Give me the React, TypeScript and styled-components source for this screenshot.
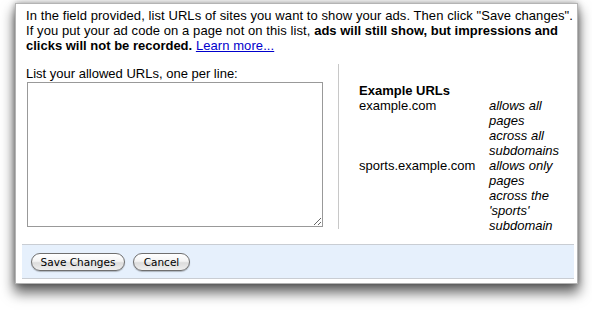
import styled, { createGlobalStyle } from "styled-components";

const Global = createGlobalStyle`
  html, body {
    margin: 0;
    min-height: 310px;
    background: #fff;
    font-family: "Liberation Sans", Arial, sans-serif;
  }
`;

const Stage = styled.div`
  padding: 3px 14px 27px 15px;
`;

const Panel = styled.div`
  width: 561px;
  border: 1px solid #b4b4b4;
  background: #fff;
  box-shadow: 0 8px 12px 1px rgba(0, 0, 0, 0.6), 0 0 6px rgba(0, 0, 0, 0.35);
  font-size: 13px;
  line-height: 15px;
  color: #000;
`;

const Intro = styled.p`
  margin: 0;
  padding: 4px 3px 0 10px;
  letter-spacing: 0.08px;

  b {
    letter-spacing: 0;
  }
`;

const Link = styled.a`
  color: #0000cc;
  text-decoration: underline;
`;

const Columns = styled.div`
  display: flex;
  margin: 11px 0 0 10px;
`;

const LeftCol = styled.div`
  width: 296px;
  padding: 2px 16px 0 0;
`;

const UrlBox = styled.textarea`
  display: block;
  box-sizing: border-box;
  width: 296px;
  height: 145px;
  margin: 1px 0 0 1px;
  border: 1px solid #999;
  resize: both;
  font: inherit;
`;

const RightCol = styled.div`
  border-left: 1px solid #c8c8c8;
  padding: 19px 0 0 20px;
  height: 146px;
`;

const Heading = styled.div`
  font-weight: bold;
`;

const ExampleTable = styled.table`
  border-collapse: collapse;
  td {
    padding: 0;
    vertical-align: top;
  }
`;

const UrlCell = styled.td`
  width: 130px;
`;

const NoteCell = styled.td`
  width: 73px;
  font-style: italic;
`;

const Footer = styled.div`
  display: flex;
  gap: 8px;
  align-items: center;
  height: 33px;
  margin: 15px 3px 4px 6px;
  padding-left: 9px;
  background: #e6f0fc;
  border-top: 1px solid #c9cdd3;
  border-bottom: 1px solid #c9cdd3;
`;

const AquaButton = styled.button<{ $w: number }>`
  box-sizing: border-box;
  width: ${(p) => p.$w}px;
  height: 18px;
  padding: 0;
  border: 1px solid #6f6f6f;
  border-radius: 9px;
  background: linear-gradient(#ffffff 0%, #f4f4f4 45%, #dcdcdc 55%, #efefef 100%);
  box-shadow: 0 1px 1px rgba(0, 0, 0, 0.25);
  font-family: "DejaVu Sans", "Lucida Grande", sans-serif;
  font-size: 10.5px;
  color: #000;
  line-height: 16px;
`;

export default function App() {
  return (
    <>
      <Global />
      <Stage>
        <Panel>
          <Intro>
            In the field provided, list URLs of sites you want to show your ads. Then click "Save changes".
            <br />
            If you put your ad code on a page not on this list, <b>ads will still show, but impressions and</b>
            <br />
            <b>clicks will not be recorded.</b> <Link href="#">Learn more...</Link>
          </Intro>
          <Columns>
            <LeftCol>
              List your allowed URLs, one per line:
              <UrlBox />
            </LeftCol>
            <RightCol>
              <Heading>Example URLs</Heading>
              <ExampleTable>
                <tbody>
                  <tr>
                    <UrlCell>example.com</UrlCell>
                    <NoteCell>allows all pages across all subdomains</NoteCell>
                  </tr>
                  <tr>
                    <UrlCell>sports.example.com</UrlCell>
                    <NoteCell>allows only pages across the 'sports' subdomain</NoteCell>
                  </tr>
                </tbody>
              </ExampleTable>
            </RightCol>
          </Columns>
          <Footer>
            <AquaButton $w={94}>Save Changes</AquaButton>
            <AquaButton $w={57}>Cancel</AquaButton>
          </Footer>
        </Panel>
      </Stage>
    </>
  );
}
